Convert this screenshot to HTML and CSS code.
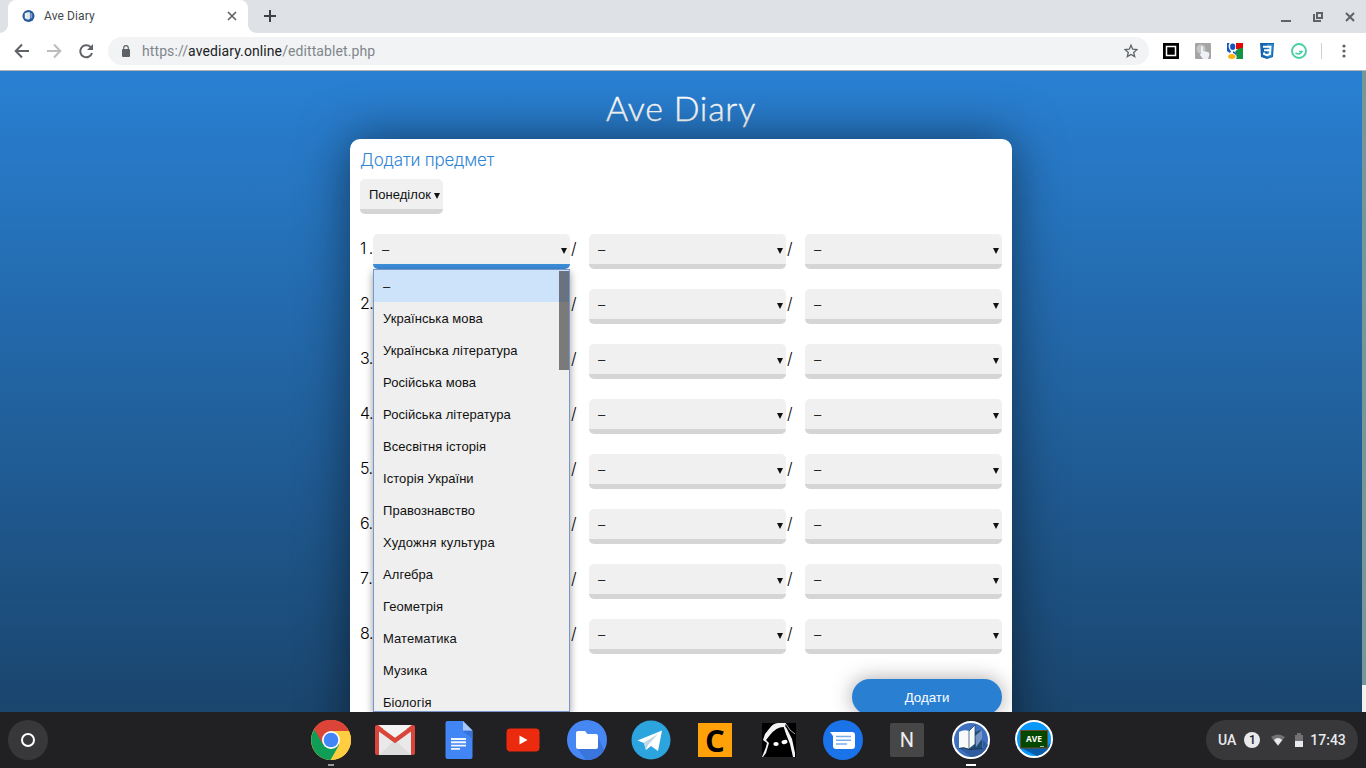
FILE: index.html
```html
<!DOCTYPE html>
<html lang="uk">
<head>
<meta charset="utf-8">
<title>Ave Diary</title>
<link rel="stylesheet" href="styles.css">
</head>
<body>
<div class="screen">
<header class="tabstrip">
  <div class="tab">
    <svg class="favicon" viewBox="0 0 14 14"><circle cx="7" cy="7" r="6.500" fill="#285b9c"/><path d="M3 9.500V4l3-1 2.500 0v7l-2 1z" fill="#edf2f5"/><path d="M6.200 4v6" stroke="#b7c7d6" stroke-width=".6"/><path d="M9 4h2v5l-2 1z" fill="#7e9fcd"/></svg>
    <span class="tab-title">Ave Diary</span>
    <svg class="tab-close" viewBox="0 0 10 10"><path d="M1 1l8 8M9 1l-8 8" stroke="#5f6368" stroke-width="1.700"/></svg>
  </div>
  <svg class="new-tab" viewBox="0 0 12 12"><path d="M6 0v12M0 6h12" stroke="#3c4043" stroke-width="2"/></svg>
  <svg class="window-controls" viewBox="0 0 76 14"><path d="M1 11h10" stroke="#5f6368" stroke-width="2"/><path d="M37 3h5v5h-5zM34 4v7h7" fill="none" stroke="#5f6368" stroke-width="2"/><path d="M66 3l8 8M74 3l-8 8" stroke="#5f6368" stroke-width="2"/></svg>
</header>
<nav class="toolbar">
  <svg class="nav-icons" viewBox="0 0 80 16"><g fill="none" stroke="#5f6368" stroke-width="2"><path d="M15 8H2M8 1.500L1.700 8 8 14.500"/><path d="M33 8h13M40 1.500L46.300 8 40 14.500" stroke="#babcbe"/><path d="M76.500 4A6 6 0 1 0 78 10"/></g><path d="M79 1v6h-6z" fill="#5f6368"/></svg>
  <div class="address">
    <svg class="lock" viewBox="0 0 10 12"><rect x="1" y="4" width="8" height="8" rx="1" fill="#5f6368"/><path d="M2.700 5V3a2.300 2.300 0 0 1 4.600 0v2" fill="none" stroke="#5f6368" stroke-width="1.200"/></svg>
    <span class="url">https://<b>avediary.online</b>/edittablet.php</span>
    <svg class="star" viewBox="0 0 14 14"><path d="M7 1.200l1.700 4 4.300.4-3.300 2.800 1 4.200L7 10.400l-3.700 2.200 1-4.200L1 5.600l4.300-.4z" fill="none" stroke="#5f6368" stroke-width="1.300"/></svg>
  </div>
  <div class="extensions">
    <svg viewBox="0 0 16 16"><path d="M0 0h16v16H0z"/><path d="M3.500 3.500h9v9h-9z" stroke="#fff" stroke-width="1.500"/></svg>
    <svg viewBox="0 0 16 16"><rect width="16" height="16" rx="1" fill="#a5a5a5"/><circle cx="6" cy="6" r="4.500" fill="#c6c6c6"/><path d="M6 11V4q1-2 2 0v4l5 1q2 1 1 4l-1 3H8l-3-4q0-2 1-1z" fill="#eef1f5"/></svg>
    <svg viewBox="0 0 16 16"><path d="M0 0h16v16H0z" fill="#fff"/><path d="M9 0h7v6H9z" fill="#e30808"/><path d="M8 9Q10 5 16 5v11H9q2-3-1-7z" fill="#129443"/><path d="M0 0h2.500Q0 4 4 8.500L3 10 0 8z" fill="#1554c0"/><ellipse cx="5.700" cy="3.700" rx="2.600" ry="3.300" fill="#1554c0"/><ellipse cx="4.800" cy="13.500" rx="3.700" ry="2.500" fill="#f9b614"/><path d="M6 8l3 2 1 4-2-3-2-1z" fill="#1554c0"/></svg>
    <svg viewBox="0 0 16 16"><path d="M1 0h14l-1 14-6 2-6-2z" fill="#1464af"/><path d="M8 1h6l-1 12-5 2z" fill="#2a89d0"/><path d="M4 3.700h7.500L11 11 8 12.200 5 11V9.500M5 7.300h6" fill="none" stroke="#fff" stroke-width="1.900"/></svg>
    <svg viewBox="0 0 16 16"><circle cx="8" cy="8" r="7" fill="#fff" stroke="#48cea6" stroke-width="1.900"/><path d="M4.500 10Q9 12.500 11 8.500H8" fill="none" stroke="#48cea6" stroke-width="1.600"/></svg>
  </div>
  <span class="divider"></span>
  <svg class="more" viewBox="0 0 4 14"><g fill="#5f6368"><circle cx="2" cy="2" r="1.600"/><circle cx="2" cy="7" r="1.600"/><circle cx="2" cy="12" r="1.600"/></g></svg>
</nav>
<main class="page">
  <h1>Ave Diary</h1>
  <section class="card">
    <h2>Додати предмет</h2>
    <div class="select day">Понеділок</div>
    <div class="rows">
      <div class="row"><span class="num one">1.</span><div class="select active">–<div class="dropdown">
        <ul class="options"><li class="selected">–</li><li>Українська мова</li><li>Українська література</li><li>Російська мова</li><li>Російська література</li><li>Всесвітня історія</li><li>Історія України</li><li>Правознавство</li><li class="wide">Художня культура</li><li>Алгебра</li><li>Геометрія</li><li>Математика</li><li>Музика</li><li>Біологія</li></ul><span class="thumb"></span></div></div><span class="slash">/</span><div class="select">–</div><span class="slash">/</span><div class="select">–</div></div>
      <div class="row"><span class="num">2.</span><div class="select"></div><span class="slash">/</span><div class="select">–</div><span class="slash">/</span><div class="select">–</div></div>
      <div class="row"><span class="num">3.</span><div class="select"></div><span class="slash">/</span><div class="select">–</div><span class="slash">/</span><div class="select">–</div></div>
      <div class="row"><span class="num">4.</span><div class="select"></div><span class="slash">/</span><div class="select">–</div><span class="slash">/</span><div class="select">–</div></div>
      <div class="row"><span class="num">5.</span><div class="select"></div><span class="slash">/</span><div class="select">–</div><span class="slash">/</span><div class="select">–</div></div>
      <div class="row"><span class="num">6.</span><div class="select"></div><span class="slash">/</span><div class="select">–</div><span class="slash">/</span><div class="select">–</div></div>
      <div class="row"><span class="num seven">7.</span><div class="select"></div><span class="slash">/</span><div class="select">–</div><span class="slash">/</span><div class="select">–</div></div>
      <div class="row"><span class="num">8.</span><div class="select"></div><span class="slash">/</span><div class="select">–</div><span class="slash">/</span><div class="select">–</div></div>
    </div>
    <button class="submit">Додати</button>
  </section>
  <span class="scrollbar"></span>
</main>
<footer class="shelf">
  <div class="launcher"><span></span></div>
  <div class="apps">
    <div class="app running"><svg viewBox="0 0 40 40"><circle cx="20" cy="20" r="20" fill="#ffcd40"/><path d="M3.200 9.500A20 20 0 0 0 19.500 40L29 24H20z" fill="#0f9d58"/><path d="M20 11h17.900A20 20 0 0 1 20 40l8-15z" fill="#ffcd40"/><path d="M3 9A20 20 0 0 1 37.900 11H20l-7.800 13.500z" fill="#db4437"/><circle cx="20" cy="20" r="9" fill="#fff"/><circle cx="20" cy="20" r="7.300" fill="#4285f4"/></svg></div>
    <div class="app"><svg viewBox="0 0 40 40"><rect y="5" width="40" height="30" rx="2" fill="#d9453a"/><path d="M4 9h32v26H4z" fill="#e9e9e9"/><path d="M4 35l16-15 16 15z" fill="#ddd"/><path d="M3 5h34L20 18z" fill="#f3f3f3"/><path d="M1.500 7L20 20.500 38.500 7" fill="none" stroke="#d9453a" stroke-width="4.500"/></svg></div>
    <div class="app"><svg viewBox="0 0 40 40"><path d="M6.500 1H24l9.500 9.500V37q0 2-2 2h-23q-2 0-2-2V3q0-2 2-2z" fill="#4285f4"/><path d="M24 1l9.500 9.500H24z" fill="#a9c7fa"/><path d="M24 11h9.500v8z" fill="#3972d6"/><path d="M12 19h15M12 22.300h15M12 25.600h15M12 28.900h9" stroke="#f2f6ff" stroke-width="1.900"/></svg></div>
    <div class="app"><svg viewBox="0 0 40 40"><rect x="3.500" y="8.500" width="33" height="23" rx="4" fill="#eb2a0e"/><path d="M16.500 15.500v9l8-4.500z" fill="#fff"/></svg></div>
    <div class="app"><svg viewBox="0 0 40 40"><circle cx="20" cy="20" r="20" fill="#4687f4"/><path d="M10 28l9 12q13 0 18-10l-7-15z" fill="#3a75dc"/><path d="M11 11h7l2.500 3H29q2 0 2 2v11q0 2-2 2H11q-2 0-2-2V13q0-2 2-2z" fill="#fff"/></svg></div>
    <div class="app"><svg viewBox="0 0 40 40"><circle cx="20" cy="20" r="19.500" fill="#2ca5df"/><path d="M6.500 20.500L31 10.500 27 31 20 26l-5 4-2-7z" fill="#fff"/><path d="M13 22.500L27 14 17 25l-2 5z" fill="#bfd6e5"/></svg></div>
    <div class="app"><div class="tile orange">C</div></div>
    <div class="app"><svg viewBox="0 0 40 40"><path d="M3 3h34v34H3z"/><path d="M10 9Q14 3 19 3h8l-1 4q-8-1-15 8l-4 5 3 3-3 10-3 4H3l4-10 1-4-4-3 2-6z" fill="#f4f4f4"/><path d="M24 5q3 1 5 6l4 8 3 14v4h-2l-3-13-4-10z" fill="#f4f4f4"/><path d="M27 4l4 6 5 4" fill="none" stroke="#aaa"/><ellipse cx="17" cy="24" rx="2.700" ry="2" fill="#fff"/><ellipse cx="25.500" cy="22" rx="3" ry="2.100" fill="#fff" transform="rotate(-15 25.500 22)"/></svg></div>
    <div class="app"><svg viewBox="0 0 40 40"><circle cx="20" cy="20" r="20" fill="#1a73e8"/><path d="M7 12h22q3 0 3 3v11q0 3-3 3H13q-3 0-3-3V16z" fill="#fff"/><path d="M13 16.500h15M13 20.300h15M13 24h11" stroke="#79adf2" stroke-width="1.500"/></svg></div>
    <div class="app"><div class="tile gray">N</div></div>
    <div class="app current"><svg viewBox="0 0 40 40"><circle cx="20" cy="20" r="18" fill="#3f70c0" stroke="#fff" stroke-width="2"/><path d="M8 28h24v-8l5 5q-4 11-17 12z" fill="#305b9d"/><path d="M24 12l7-2v18l-14 2z" fill="#204d72"/><path d="M24 16l7-6v9l-6 8z" fill="#7795c4"/><path d="M8 12q5-3 10-1v18q-5-2-10-1z" fill="#f7faf9"/><path d="M18 11l6-6v19l-6 5z" fill="#f7faf9" stroke="#17395c" stroke-width=".7"/><path d="M8 28.500q5-2 10 1l13-1" fill="none" stroke="#17395c"/></svg></div>
    <div class="app"><svg viewBox="0 0 40 40"><circle cx="19" cy="19" r="18" fill="#0799fa" stroke="#fff" stroke-width="2"/><path d="M6 28h26l4-7q-1 11-14 15z" fill="#075ca9"/><rect x="5.500" y="10.500" width="27" height="17.500" fill="#034700" stroke="#6b4b2e"/><text x="11" y="22" textLength="16" lengthAdjust="spacingAndGlyphs" class="ave">AVE</text><path d="M25 26.500h4" stroke="#a6bda6"/></svg></div>
  </div>
  <div class="status"><span>UA</span><span class="badge">1</span>
    <svg class="wifi" viewBox="0 0 16 14"><path d="M1 4Q8-1 15 4L8 13z" fill="#727274"/><path d="M3.800 7Q8 3 12.200 7L8 12.500z" fill="#e8eaed"/></svg>
    <svg class="battery" viewBox="0 0 8 14"><path d="M0 2h2V0h4v2h2v6H0z" fill="#727274"/><path d="M0 8h8v6H0z" fill="#e8eaed"/></svg>
    <span class="time">17:43</span></div>
</footer>
</div>
</body>
</html>
```
FILE: styles.css
```css
* { box-sizing: border-box; }
body { margin: 0; overflow: hidden; font-family: "Liberation Sans", Arial, sans-serif; }
svg { display: block; flex: none; }
.screen { width: 1366px; height: 768px; display: flex; flex-direction: column; }

.tabstrip { height: 33px; flex: none; display: flex; align-items: flex-start; background: #dee1e6; padding-left: 8px; }
.tab { width: 240px; height: 33px; background: #fff; border-radius: 8px 8px 0 0; display: flex; align-items: center; padding: 0 11px 1px 14px; position: relative; font: 12px/16px Roboto, sans-serif; color: #45494d; }
.tab::before, .tab::after { content: ""; position: absolute; bottom: 0; width: 8px; height: 8px; }
.tab::before { left: -8px; background: radial-gradient(circle at 0 0, #dee1e6 7.5px, #fff 8px); }
.tab::after { right: -8px; background: radial-gradient(circle at 100% 0, #dee1e6 7.5px, #fff 8px); }
.favicon { width: 13px; height: 14px; margin-right: 9px; }
.tab-title { flex: 1; letter-spacing: .1px; }
.tab-close { width: 10px; height: 10px; }
.new-tab { width: 12px; height: 12px; margin: 10px 0 0 16px; }
.window-controls { width: 76px; height: 14px; margin: 10px 10px 0 auto; }

.toolbar { height: 38px; flex: none; display: flex; align-items: center; background: #fff; border-bottom: 1px solid #b6b4b2; padding: 0 19px 1px 14px; }
.nav-icons { width: 80px; height: 16px; }
.address { width: 1041px; height: 28px; flex: none; margin-left: 14px; border-radius: 14px; background: #f1f3f4; display: flex; align-items: center; padding: 0 11px 0 13px; }
.lock { width: 10px; height: 12px; }
.url { font: 14px/20px Roboto, sans-serif; color: #80868b; margin-left: 11px; flex: 1; letter-spacing: .09px; }
.url b { font-weight: 400; color: #202124; }
.star { width: 14px; height: 14px; }
.extensions { display: flex; gap: 16px; margin-left: 14px; }
.extensions svg { width: 16px; height: 16px; }
.divider { width: 1px; height: 16px; background: #cdd0d3; margin: 0 20px 0 14px; }
.more { width: 4px; height: 14px; }

.page { height: 641px; flex: none; position: relative; overflow: hidden; background: linear-gradient(#2980d3, #1a456d); display: flex; flex-direction: column; align-items: center; padding-right: 4px; }
h1 { margin: 16px 0 0; height: 52px; flex: none; color: #fff; font: 300 34px/42px Lato, sans-serif; letter-spacing: .75px; -webkit-text-stroke: .4px #fff; }
.card { width: 662px; height: 620px; flex: none; background: #fff; border-radius: 10px; padding: 11px 10px 10px; box-shadow: 0 0 50px rgba(0,0,0,.5); display: flex; flex-direction: column; }
h2 { margin: 0 0 9px; color: #3285d5; font: 300 17px/20px Inter, sans-serif; letter-spacing: -.2px; white-space: nowrap; }
.select { position: relative; width: 197px; height: 35px; flex: none; border-radius: 5px; border-bottom: 5px solid #d5d5d5; background: #f0f0f0; color: #111; font-size: 13px; line-height: 31px; padding-left: 9px; }
.select::after { content: ""; position: absolute; right: 3px; top: 14px; width: 6px; height: 6px; background: #111; clip-path: polygon(0 0, 100% 0, 50% 100%); }
.day { width: 83px; }
.active { border-bottom-color: #3c8dda; }
.rows { display: flex; flex-direction: column; gap: 20px; margin-top: 20px; }
.row { display: flex; height: 35px; font: 300 16px/29px Inter, sans-serif; color: #000; }
.row .select { font-family: "Liberation Sans", Arial, sans-serif; font-weight: 400; font-size: 13px; line-height: 32px; }
.num { width: 13px; white-space: nowrap; letter-spacing: -.5px; }
.one { letter-spacing: 2.4px; }
.seven { letter-spacing: 1.2px; }
.slash { width: 19px; padding-left: 1px; }
.submit { align-self: flex-end; width: 150px; height: 36px; margin-top: 25px; border: 0; border-radius: 18px; color: #fff; background: #2980d3; box-shadow: 0 0 20px rgba(0,0,0,.35); font: 13.333px "Liberation Sans", Arial, sans-serif; flex: none; }
.dropdown { position: absolute; z-index: 3; left: 0; top: 35px; width: 197px; height: 443px; overflow: hidden; border: 1px solid #7895cd; background: #efefef; box-shadow: 0 3px 8px rgba(0,0,0,.4); }
.options { list-style: none; margin: 0; padding: 0; letter-spacing: .06px; }
.options li { height: 32px; line-height: 33px; padding-left: 9px; }
.options .wide { letter-spacing: .25px; }
.options .selected { background: #cce3f9; line-height: 34px; }
.thumb { position: absolute; right: 0; top: 1px; width: 10px; height: 99px; background: linear-gradient(#68737f 31px, #7a7a7a 31px); }
.scrollbar { position: absolute; right: 0; top: 0; width: 4px; height: 641px; background: linear-gradient(#759798 614px, #f1f1f1 614px); }

.shelf { height: 56px; flex: none; background: #212123; display: flex; align-items: center; padding: 0 8px; }
.launcher { width: 40px; height: 40px; border-radius: 50%; background: #38383a; display: grid; place-items: center; }
.launcher span { width: 14px; height: 14px; border: 2px solid #fff; border-radius: 50%; }
.apps { display: flex; margin-left: 251px; }
.app { width: 64px; height: 56px; display: grid; place-items: center; position: relative; }
.app svg { width: 40px; height: 40px; }
.running::after, .current::after { content: ""; position: absolute; bottom: 2px; left: 29px; width: 6px; height: 2px; background: #999; }
.current::after { width: 10px; left: 27px; background: #fff; }
.tile { width: 34px; height: 34px; display: grid; place-items: center; }
.orange { background: #ffa20a; color: #000; font: 700 31px/34px "Open Sans", sans-serif; }
.gray { background: #464646; color: #eee; font: 20px/34px Roboto, sans-serif; border-radius: 2px; }
.ave { font: 700 8.5px "Open Sans", sans-serif; fill: #fff; }
.status { width: 152px; height: 40px; border-radius: 20px; background: #38383a; color: #e8eaed; display: flex; align-items: center; margin-left: auto; padding-left: 12px; font: 500 14px Roboto, sans-serif; }
.badge { width: 16px; height: 16px; border-radius: 50%; background: #e8eaed; color: #202124; font-size: 12px; line-height: 16px; text-align: center; margin-left: 8px; }
.wifi { width: 16px; height: 14px; margin-left: 10px; }
.battery { width: 8px; height: 14px; margin-left: 9px; }
.time { margin-left: 7px; }
```
